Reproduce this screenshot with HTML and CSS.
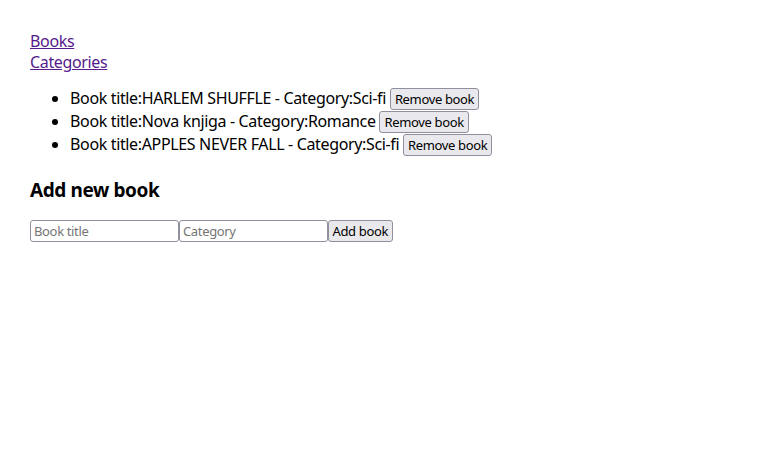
FILE: index.html
```html
<!DOCTYPE html>
<html>
<head>
<meta charset="utf-8">
<link rel="stylesheet" href="styles.css">
</head>
<body>
<div class="app">
  <nav class="nav">
    <a href="#" class="nav-link">Books</a>
    <a href="#" class="nav-link">Categories</a>
  </nav>
  <ul class="book-list">
    <li class="book-item">Book title:HARLEM SHUFFLE - Category:Sci-fi <button class="btn">Remove book</button></li>
    <li class="book-item">Book title:Nova knjiga - Category:Romance <button class="btn">Remove book</button></li>
    <li class="book-item">Book title:APPLES NEVER FALL - Category:Sci-fi <button class="btn">Remove book</button></li>
  </ul>
  <h3 class="form-title">Add new book</h3>
  <form class="book-form">
    <input class="field" type="text" placeholder="Book title"><input class="field" type="text" placeholder="Category"><button class="btn" type="button">Add book</button>
  </form>
</div>
</body>
</html>
```

FILE: styles.css
```css
body {
  margin: 0;
  background: #fff;
  color: #000;
  font-family: "Noto Sans", "Open Sans", sans-serif;
  font-size: 16px;
  letter-spacing: -0.35px;
}
.app {
  padding: 31px 30px 30px;
}
.nav {
  display: flex;
  flex-direction: column;
  align-items: flex-start;
  line-height: 21px;
}
.nav-link {
  color: #551a8b;
}
.book-list {
  margin: 14px 0 16px;
  padding-left: 40px;
}
.book-item {
  line-height: 23px;
}
.btn {
  font-family: "Noto Sans", sans-serif;
  font-size: 13px;
  letter-spacing: -0.35px;
  line-height: 16px;
  padding: 2px 4px;
  border: 1px solid #8f8f9d;
  border-radius: 3px;
  background: #e9e9ed;
  color: #000;
}
.form-title {
  font-size: 19px;
  letter-spacing: -0.4px;
  margin: 21px 0 17px;
}
.book-form {
  display: flex;
  align-items: stretch;
}
.field {
  width: 149px;
  box-sizing: border-box;
  height: 22px;
  border: 1px solid #8f8f9d;
  border-radius: 3px;
  padding: 1px 3px;
  font-family: "Noto Sans", sans-serif;
  font-size: 13px;
  letter-spacing: -0.35px;
  margin: 0;
}
.field::placeholder {
  color: #757575;
}
.book-form .btn {
  height: 22px;
  margin: 0;
  padding: 1px 3.5px;
}
```
